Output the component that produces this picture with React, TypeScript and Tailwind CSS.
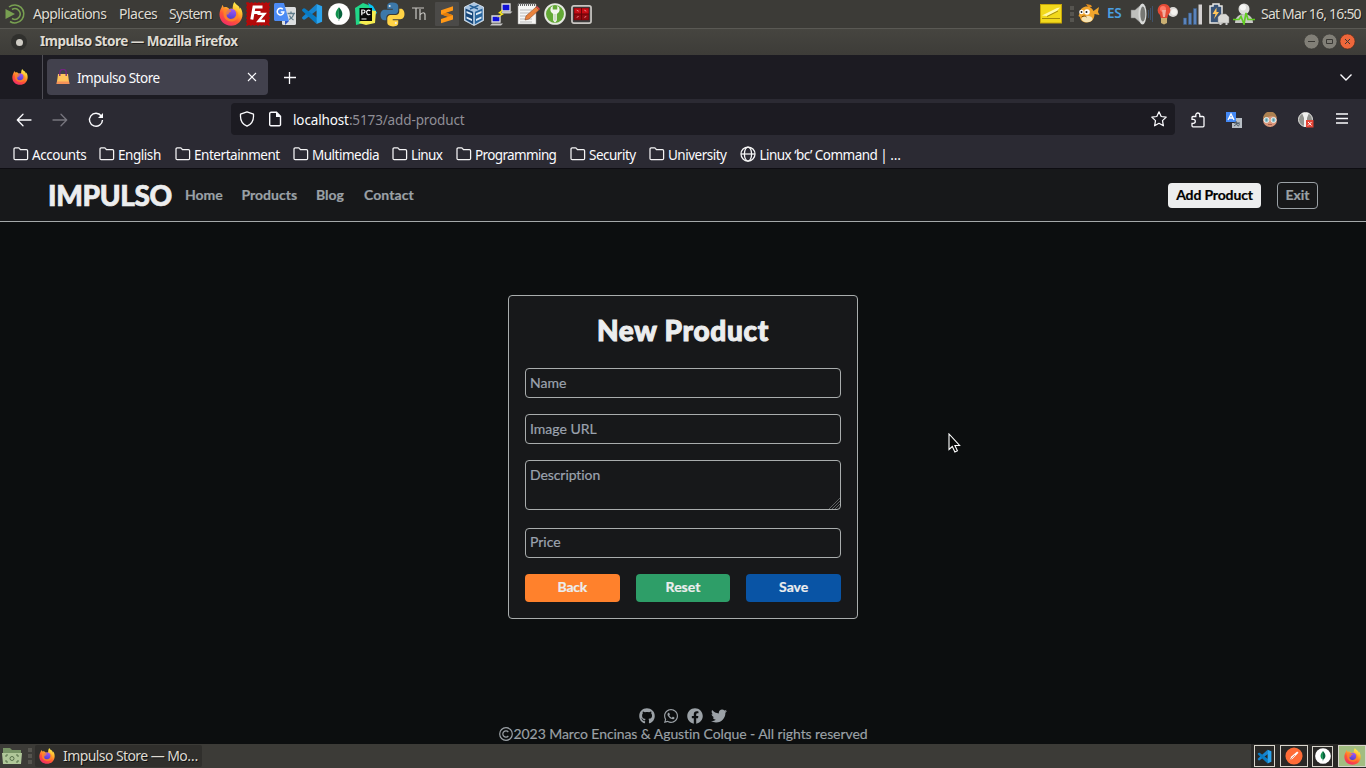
import React from "react";
import { FaGithub, FaWhatsapp, FaFacebook, FaTwitter } from "react-icons/fa";

type IconProps = { size?: number };

function Firefox({ size = 24 }: IconProps) {
  const id = React.useId();
  return (
    <svg width={size} height={size} viewBox="0 0 24 24" className="block shrink-0">
      <defs>
        <linearGradient id={id + "a"} x1="0.8" y1="0" x2="0.25" y2="1">
          <stop offset="0.05" stopColor="#fff44f" />
          <stop offset="0.35" stopColor="#ffb12c" />
          <stop offset="0.65" stopColor="#ff5634" />
          <stop offset="1" stopColor="#f0286c" />
        </linearGradient>
        <linearGradient id={id + "b"} x1="0.6" y1="0" x2="0.4" y2="1">
          <stop offset="0" stopColor="#a458f5" />
          <stop offset="1" stopColor="#4a3fd0" />
        </linearGradient>
      </defs>
      <path d="M15.500 0c.6 2 3.200 3 4.400 4.600.6.800.7 1.700.8 2.100.5-.3.600-1 .6-1.300 1.300 2 2.200 4.200 2.200 6.800C23.500 18.800 18.500 23.700 12 23.700S.5 18.800.5 12.600C.5 10 1.300 7.300 2.500 5.500c.3-.5.500-1.300.6-2.600.9.600 1.400 1.700 1.700 2.500 1-.5 2.200-.5 3.200-.1 1 .4 1.700 1 2.300 1.700 1-.3 2.200-.3 3.200 0 .4-2.300.2-5 2-7z" fill={`url(#${id}a)`} />
      <circle cx="12.200" cy="12" r="5.300" fill={`url(#${id}b)`} />
      <path d="M4.500 7c2-.7 4-.4 5.500.9 1 .2 2.100.3 2.400.8-.2 1-2 1.500-2.600 2.100-.3.500.1 1 .1 1.500-.9-.3-1.800 0-2.200.7-.1 2.700 2.500 4.300 5 3.800 2.600-.4 4.600-2.600 4.500-5.300 0-1.500-.6-2.700-1.500-3.600 2.200.7 3.500 2.800 3.500 5.100 0 3.900-3 6.500-7 6.500s-7.500-2.900-7.700-7z" fill="#ff8a24" opacity="0.75" />
    </svg>
  );
}

function FileZilla() {
  return (
    <svg width="24" height="24" viewBox="0 0 24 24">
      <rect x="1" y="1" width="22" height="22" fill="#b30a0a" stroke="#b30a0a" strokeWidth="1.600" strokeDasharray="2 1.600" />
      <path d="M5.800 17.500L8 5h8.500M7 10.500h7.500" fill="none" stroke="#fff" strokeWidth="3" />
      <path d="M11.500 11.800h7L12.500 19H19" fill="none" stroke="#fff" strokeWidth="2.300" />
    </svg>
  );
}

function Translate() {
  return (
    <svg width="24" height="24" viewBox="0 0 24 24">
      <rect x="9" y="5" width="14" height="18" rx="1.500" fill="#dcdedf" />
      <path d="M14.500 11.500h7.500M18 9.500v2M20.700 11.500c-.5 3-2.500 5-4.500 6M16.500 13.500c.7 2 2.200 3.500 4 4.500" stroke="#607d8b" strokeWidth="1.300" fill="none" />
      <path d="M12 19h4l-4 4z" fill="#3357c2" />
      <path d="M2.500 1H11l5 18H2.500C1.700 19 1 18.300 1 17.500v-15C1 1.700 1.700 1 2.500 1z" fill="#4c8bf5" />
      <path d="M9.800 7.200a3.300 3.300 0 1 0 1 2.800H7.800" stroke="#fff" strokeWidth="1.500" fill="none" />
    </svg>
  );
}

function VSCode({ size = 22 }: IconProps) {
  return (
    <svg width={size} height={size} viewBox="0 0 24 24">
      <path d="M17 1L1.200 15.500v1.300L3 18.200l1.300-.1L17.500 8z" fill="#1684cf" />
      <path d="M17 23L1.200 8.500V7.200L3 5.800l1.300.1L17.500 16z" fill="#087bc4" />
      <path d="M17 1l6 2.600v16.800L17 23z" fill="#2aa4ef" />
    </svg>
  );
}

function Mongo({ size = 22 }: IconProps) {
  return (
    <svg width={size} height={size} viewBox="0 0 24 24">
      <circle cx="12" cy="12" r="11.800" fill="#fff" />
      <path d="M12 4.500c-5.500 5.800-4.200 10.500-.3 13.200z" fill="#10924e" />
      <path d="M12 4.500c5.500 5.800 4.200 10.500.3 13.200l-.2 2h-.4z" fill="#07633d" />
    </svg>
  );
}

function PyCharm() {
  return (
    <svg width="24" height="24" viewBox="0 0 24 24">
      <path d="M1 6l8-5 8 3-3 16-12 3z" fill="#21d789" />
      <path d="M14 1l5 3 4 7-4 3z" fill="#07c3f2" />
      <path d="M15 8l7 1-1 12-9 2-7-2z" fill="#f6ed50" />
      <rect x="5.500" y="6" width="12.500" height="13" fill="#080808" />
      <path d="M7.500 17h5M7.800 13.200V8h1.700a1.500 1.500 0 0 1 0 3H8M16.300 8.800c-2.400-1.600-4.100 0-3.600 2.100.4 2 2.200 2.300 3.600 1.200" stroke="#fff" strokeWidth="1.200" fill="none" />
    </svg>
  );
}

function Python() {
  return (
    <svg width="25" height="25" viewBox="0 0 24 24">
      <path d="M12 .5C7.500.5 7 2.300 7 4v2.500h5.300v1H4.500C1.500 7.500.5 10 .5 12.500s1.200 5 3.500 5h2V15c0-2 1.500-3.500 3.500-3.500h5c1.600 0 3-1.300 3-3V4c0-2-2-3.500-5.500-3.500z" fill="#3c78a9" />
      <circle cx="9.300" cy="3.800" r="1" fill="#eee" />
      <path d="M12.500 23.500c4.500 0 5-1.800 5-3.500v-2.500h-5.300v-1h7.300c3 0 4-2.500 4-5s-1.200-5-3.500-5h-1.500V9c0 2-1.500 3.500-3.500 3.500H10c-1.600 0-3 1.300-3 3V20c0 2 2 3.500 5.500 3.500z" fill="#ffd346" />
      <circle cx="15.200" cy="20.200" r="1" fill="#eee" />
    </svg>
  );
}

function Sublime() {
  return (
    <svg width="24" height="24" viewBox="0 0 24 24">
      <rect width="24" height="24" rx="1" fill="#4b4a48" />
      <path d="M6 8.200L18 4.200v4.300l-7 2.300 7 2.400v4.300L6 21.300V17l7-2.300-7-2.400z" fill="#ff9817" />
      <path d="M6 12.300l5-1.500 7 2.400-5 1.500z" fill="#e37d0a" />
    </svg>
  );
}

function VirtualBox() {
  return (
    <svg width="24" height="24" viewBox="0 0 24 24">
      <path d="M12 .5l9.500 4.500v13.500L12 23.500l-9.500-5V5z" fill="#a9c5e2" stroke="#dfeaf4" strokeWidth=".8" />
      <path d="M3.500 6.500L11.500 10v12.500l-8-4.700z" fill="#174678" />
      <path d="M20.500 6.500L12.500 10v12.500l8-4.700z" fill="#28659d" />
      <path d="M4.500 9l5.500 2.300v2L4.500 11zM4.500 14.500l5.500 2.500v2l-5.500-2.500zM14 11.300L19.500 9v2L14 13.300zM14 17l5.500-2.500v2L14 19z" fill="#e0ecf6" />
      <path d="M7.500 3.300L16 7M16.500 3.300L8 7" stroke="#245e95" strokeWidth="1.400" />
      <path d="M12 9.500v13.500" stroke="#d9e6f2" />
    </svg>
  );
}

function Putty() {
  return (
    <svg width="24" height="24" viewBox="0 0 24 24">
      <g stroke="#ddd" fill="#1010d8">
        <path d="M13 2h8v7h-8zM3 14h8v6H3z" strokeWidth="1.300" />
      </g>
      <path d="M11.500 11.500h10l2-2h-10zM1 23.500h11l2-2H3z" fill="#c8c8c8" />
      <path d="M14 7l-5 4 3 1-4 4 7-4-3-1z" fill="#ffec18" />
    </svg>
  );
}

function Notepad() {
  return (
    <svg width="24" height="24" viewBox="0 0 24 24">
      <path d="M2 2h18v20H2z" fill="#f6f6f4" stroke="#999" strokeWidth=".5" />
      <path d="M2 2.500h18" stroke="#666" strokeWidth="3" strokeDasharray="1 1" />
      <path d="M4 8h12M4 11h9M4 14h7M4 17h12M4 20h12" stroke="#bbb" />
      <path d="M9 18l1-4L20 5l3 3-10 9z" fill="#e9833d" stroke="#8c4d27" strokeWidth=".6" />
      <path d="M20 5l1-1 3 3-1 1z" fill="#e34949" />
    </svg>
  );
}

function KeePass() {
  return (
    <svg width="22" height="22" viewBox="0 0 24 24">
      <circle cx="12" cy="12" r="10.800" fill="#63a936" stroke="#e5e9e1" strokeWidth="2" />
      <path d="M9.500 3v4h5V3a5 5 0 0 1-.5 9v7l-2 2.500-2-2.500v-7A5 5 0 0 1 9.500 3z" fill="#f4f5f0" />
      <path d="M12 12v7" stroke="#a7bc98" />
    </svg>
  );
}

function Cards() {
  return (
    <svg width="23" height="21" viewBox="0 0 24 22">
      <rect x="2" y="2" width="20" height="18" rx="2" fill="#3d3d3d" stroke="#c9c6c2" strokeWidth="1.800" />
      <path d="M4 4h16v13H4z" fill="#650509" />
      <path d="M4.500 4.500h7v5.500h-7zM12.500 4.500h7v5.500h-7z" fill="#c70d15" />
      <path d="M4.500 11h7v5.500h-7zM12.500 11h7v5.500h-7z" fill="#93090f" />
      <path d="M7 6.500l2 1M15 6.500l2 1M7 14l2-1M15 14l2-1" stroke="#ef8a8f" />
    </svg>
  );
}

function Mate() {
  return (
    <svg width="22" height="22" viewBox="0 0 22 22" fill="none" stroke="#78a051">
      <path d="M5 4a9 9 0 1 1 1 14.500" strokeWidth="1.500" />
      <path d="M8 6.500A5.300 5.300 0 1 1 8 15.500" strokeWidth="1.500" />
      <path d="M1.500 6l9.500 5-9.500 5z" fill="#78a051" stroke="none" />
    </svg>
  );
}

function Note() {
  return (
    <svg width="22" height="20" viewBox="0 0 22 20">
      <rect x=".5" y=".5" width="21" height="18.500" fill="#f2d91c" stroke="#c7a608" />
      <path d="M2 11.500L17 4l3-.5L17 7 7 12z" fill="#fff9aa" />
      <path d="M2 14.500h18M7 12.500L18 7" stroke="#a58b0b" fill="none" />
    </svg>
  );
}

function Fish() {
  return (
    <svg width="22" height="20" viewBox="0 0 22 20">
      <path d="M2 8c0-3 3-5.500 7-5.500 3 0 5 1.500 6.500 4.500L21 3l-1 5 1.500 3-5-1c0 5-3 8.500-8 8.500-4 0-6-2.500-6.500-5.500l-1.500-1z" fill="#f1a52c" />
      <path d="M8 0l2 3h4l-1-2z" fill="#e28d20" />
      <ellipse cx="9" cy="15" rx="5.500" ry="3.300" fill="#f5e2b2" />
      <circle cx="3.500" cy="8" r="2.300" fill="#fff" /><circle cx="9" cy="8" r="2.800" fill="#fff" />
      <circle cx="3.500" cy="8" r=".9" fill="#222" /><circle cx="8.500" cy="8" r="1" fill="#222" />
      <path d="M3.500 13c2-1.500 4-1 5 0" stroke="#774300" fill="none" />
    </svg>
  );
}

function Speaker() {
  return (
    <svg width="24" height="24" viewBox="0 0 24 24">
      <path d="M1 8h4l7-6v20l-7-6H1z" fill="#bfc0bd" stroke="#777" strokeWidth=".5" />
      <ellipse cx="12.500" cy="12" rx="4" ry="10.500" fill="#d9dad8" />
      <ellipse cx="12.800" cy="12" rx="2.500" ry="7.500" fill="#777874" />
      <path d="M18.500 8v8M20.500 6v12M22.500 4v16" stroke="#40536b" strokeWidth="1" />
    </svg>
  );
}

function Bulb() {
  return (
    <svg width="22" height="22" viewBox="0 0 22 22">
      <circle cx="16" cy="9" r="5" fill="#dbd9d6" /><circle cx="17" cy="9" r="3" fill="#f4f3ef" />
      <path d="M7 1a6.200 6.200 0 0 0-4 11l1 4h6l1-4A6.200 6.200 0 0 0 7 1z" fill="#e54b36" />
      <path d="M4 15h6v5l-3 1.500L4 20z" fill="#caaf72" />
      <circle cx="6" cy="6" r="3" fill="#ff7966" /><path d="M5 7h4l-1 7H6z" fill="#f2aea0" />
    </svg>
  );
}

function Signal() {
  return (
    <svg width="20" height="21" viewBox="0 0 20 21">
      <g fill="#5b84bc" stroke="#395c8a" strokeWidth=".5">
        <path d="M.5 14h3v6.500h-3zM5.500 9h3v11.500h-3zM10.500 4.500h3v16h-3z" />
      </g>
      <path d="M15.500.5h3.500v20h-3.500z" fill="#d3d0d0" />
    </svg>
  );
}

function Battery() {
  return (
    <svg width="22" height="22" viewBox="0 0 22 22">
      <path d="M2 3h3V1h6v2h3v17H2z" fill="#385376" stroke="#e8e7e3" strokeWidth="1.500" />
      <path d="M8.500 4.500L4.500 11h3l-1.500 5 5-7H8.500z" fill="#ffc65b" />
      <path d="M10 20v-6l3-3h5l3 3v6z" fill="#d9d9d5" stroke="#8b8b86" strokeWidth=".5" />
      <path d="M12.500 19v3M18.500 19v3" stroke="#ccc" strokeWidth="2" />
    </svg>
  );
}

function UserPulse() {
  return (
    <svg width="24" height="22" viewBox="0 0 24 22">
      <circle cx="12" cy="6" r="5.500" fill="#ddddda" /><circle cx="11" cy="4.500" r="3" fill="#f6f6f4" />
      <path d="M3 20c0-12 18-12 18 0z" fill="#c7c8c4" />
      <path d="M1 16.500h6l2-3 3 7.500 2-11 2 6.500h7" fill="none" stroke="#61cc22" strokeWidth="1.700" />
    </svg>
  );
}

function Bag() {
  return (
    <svg width="14" height="16" viewBox="0 0 14 16">
      <path d="M2 5h10l1.300 10H.7z" fill="#ffc35b" /><path d="M.9 12.500h12.200l.3 2.500H.6z" fill="#f69259" />
      <path d="M3.800 7V3.500a3.200 3.200 0 0 1 6.400 0V7" stroke="#70267e" strokeWidth="1.300" fill="none" />
    </svg>
  );
}

function Folder() {
  return (
    <svg width="16" height="14" viewBox="0 0 16 14" className="shrink-0">
      <path d="M1 11.500V2.200C1 1.500 1.500.9 2.200.9h3.300c.4 0 .7.100.9.400l1 1.300h6c.7 0 1.200.6 1.200 1.200v7.700c0 .7-.5 1.200-1.200 1.200H2.200c-.7 0-1.200-.5-1.200-1.200z" fill="none" stroke="#f4f4f5" strokeWidth="1.250" />
    </svg>
  );
}

function Globe() {
  return (
    <svg width="16" height="16" viewBox="0 0 16 16" fill="none" stroke="#f8f8f8" strokeWidth="1.250" className="shrink-0">
      <circle cx="8" cy="8" r="7" /><ellipse cx="8" cy="8" rx="3.600" ry="7" /><path d="M1 8h14" />
    </svg>
  );
}

function ArrowLeft({ size = 16 }: IconProps) {
  return <svg width={size} height={size} viewBox="0 0 16 16" fill="none" stroke="currentColor" strokeWidth="1.300" strokeLinecap="round" strokeLinejoin="round"><path d="M15 8H1.300M7 2.300L1.300 8 7 13.700" /></svg>;
}

function Postman() {
  return (
    <svg width="18" height="18" viewBox="0 0 20 20">
      <circle cx="10" cy="10" r="9.500" fill="#ff6c37" />
      <path d="M5 15l2-4.500L13.500 5l1.500 1.500-6 6z" fill="#fff" /><path d="M5.500 14.500L11 9" stroke="#c9542b" strokeWidth=".7" />
    </svg>
  );
}

const launchers = [
  <Firefox key="ff" />, <FileZilla key="fz" />, <Translate key="gt" />, <VSCode key="vs" />, <Mongo key="mo" />,
  <PyCharm key="pc" />, <Python key="py" />,
  <svg key="th" width="18" height="18" viewBox="0 0 18 18" fill="none" stroke="#c9c8c4" strokeWidth="1.200"><path d="M1 3h12M5 3v11M9 4v11M9 10c2-3 5-3 5 0v5" /></svg>,
  <Sublime key="su" />, <VirtualBox key="vb" />, <Putty key="pu" />, <Notepad key="no" />, <KeePass key="ke" />, <Cards key="ca" />,
];

const bookmarks = [
  { name: "Accounts", box: "w-[86px]", text: "tracking-[-0.45px]" },
  { name: "English", box: "w-[76px]", text: "tracking-[-0.45px]" },
  { name: "Entertainment", box: "w-[118px]", text: "tracking-[-0.45px]" },
  { name: "Multimedia", box: "w-[99px]", text: "tracking-[-0.5px]" },
  { name: "Linux", box: "w-[64px]", text: "tracking-[-0.6px]" },
  { name: "Programming", box: "w-[114px]", text: "tracking-[-0.63px]" },
  { name: "Security", box: "w-[79px]", text: "tracking-[-0.5px]" },
  { name: "University", box: "w-[91px]", text: "tracking-[-0.5px]" },
];

function SystemPanel() {
  return (
    <div className="flex h-7 items-center bg-[#3c3b37] text-[14px] tracking-[-0.6px] text-[#dfdbd2] [text-shadow:1px_1px_0_#22211f]">
      <div className="flex w-[33px] shrink-0 justify-center pr-[3px]"><Mate /></div>
      <span className="w-[86px]">Applications</span>
      <span className="w-[50px] tracking-[-0.5px]">Places</span>
      <span className="w-[48px] tracking-[-0.8px]">System</span>
      <div className="flex h-[26px]">
        {launchers.map((icon, i) => <div key={i} className="flex w-[27px] items-center justify-center">{icon}</div>)}
      </div>
      <div className="ml-auto flex h-[26px] shrink-0 items-center">
        <Note />
        <div className="ml-2 mr-1 flex w-1 flex-col gap-0.5"><i className="h-1 w-1 bg-[#565550]" /><i className="h-1 w-1 bg-[#565550]" /><i className="h-1 w-1 bg-[#565550]" /></div>
        <Fish />
        <span className="ml-[7px] w-[23px] text-[13.500px] font-semibold tracking-[-0.3px] text-[#4b9fe0] [text-shadow:none]">ES</span>
        <Speaker />
        <div className="ml-[3px]"><Bulb /></div>
        <div className="ml-1"><Signal /></div>
        <div className="ml-[5px]"><Battery /></div>
        <div className="ml-0.5"><UserPulse /></div>
        <span className="ml-[5px] w-[105px] tracking-[-0.8px] whitespace-nowrap">Sat Mar 16, 16:50</span>
      </div>
    </div>
  );
}

function TitleBar() {
  return (
    <div className="flex h-[27px] items-center border-t border-[#5a5954] bg-linear-to-b from-[#464540] to-[#3d3c38] text-[13.500px]">
      <div className="ml-[11px] flex h-4 w-4 items-center justify-center rounded-full bg-[#30302d]"><div className="h-[7px] w-[7px] rounded-full bg-[#d0cdc5]" /></div>
      <b className="ml-[13px] tracking-[-0.48px] text-[#dfdbd2] [text-shadow:1px_1px_0_#22211f]">Impulso Store — Mozilla Firefox</b>
      <svg className="ml-auto mr-2.5" width="52" height="16" viewBox="0 0 52 16">
        <circle cx="7.500" cy="7.500" r="7.500" fill="#817f77" stroke="#33322f" strokeWidth=".6" /><circle cx="25.500" cy="7.500" r="7.500" fill="#817f77" stroke="#33322f" strokeWidth=".6" /><circle cx="43.500" cy="7.500" r="7.500" fill="#ee673b" stroke="#542818" strokeWidth=".6" />
        <path d="M4 7.500h7M22.500 5.500h6v4h-6zM41 5l5 5M46 5l-5 5" stroke="#393834" fill="none" />
      </svg>
    </div>
  );
}

function Tabs() {
  return (
    <div className="flex h-11 items-center bg-[#1c1b22] text-[#fbfbfe]">
      <div className="flex h-full w-[43px] items-center border-r border-[#4e4d55] pl-3"><Firefox size={16} /></div>
      <div className="ml-1 flex h-9 w-[221px] items-center rounded-[4px] bg-[#42414d] pl-[9px]">
        <Bag />
        <span className="ml-[7px] pt-[4px] text-[13.500px] tracking-[-0.48px]">Impulso Store</span>
        <svg className="ml-auto mr-[11px]" width="10" height="10" viewBox="0 0 10 10"><path d="M1 1l8 8M9 1L1 9" stroke="currentColor" strokeWidth="1.100" /></svg>
      </div>
      <svg className="ml-4 mt-px" width="12" height="12" viewBox="0 0 12 12"><path d="M5.500 0v12M0 5.500h12" stroke="currentColor" strokeWidth="1.300" /></svg>
      <svg className="ml-auto mr-3.5" width="12" height="7" viewBox="0 0 12 7"><path d="M.5.5L6 6 11.500.5" stroke="currentColor" strokeWidth="1.400" fill="none" /></svg>
    </div>
  );
}

function Toolbar() {
  return (
    <div className="flex h-10 items-center bg-[#2b2a33] pt-px text-[#fbfbfe]">
      <div className="ml-4"><ArrowLeft /></div>
      <div className="ml-5 -scale-x-100 text-[#77767e]"><ArrowLeft /></div>
      <svg className="ml-5" width="16" height="16" viewBox="0 0 16 16" fill="none" stroke="currentColor" strokeWidth="1.400"><path d="M13.300 4A6.500 6.500 0 1 0 14.500 8" /><path d="M15 1v5h-5z" fill="currentColor" stroke="none" /></svg>
      <div className="mb-px ml-[127px] flex h-8 w-[944px] shrink-0 items-center rounded-[4px] bg-[#1c1b22]">
        <svg className="ml-2" width="16" height="16" viewBox="0 0 16 16" fill="none" stroke="currentColor" strokeWidth="1.300"><path d="M8 .8l6.500 2.400v2.300c0 4.500-2.200 7.800-6.500 9.700C3.700 13.300 1.500 10 1.500 5.500V3.200z" strokeLinejoin="round" /></svg>
        <svg className="ml-3" width="16" height="16" viewBox="0 0 16 16" fill="none" stroke="currentColor" strokeWidth="1.400"><path d="M2.700 3A1.500 1.500 0 0 1 4.200 1.300h5.300l4 4v8.200a1.200 1.200 0 0 1-1.200 1.200H3.900a1.200 1.200 0 0 1-1.200-1.200z" /><path d="M9 1v5h5z" fill="currentColor" stroke="none" /></svg>
        <span className="ml-2.5 pt-[3px] text-[13.500px] tracking-[-0.13px] text-[#fbfbfe]">localhost<span className="text-[#8f8e96]">:5173/add-product</span></span>
        <svg className="ml-auto mr-2" width="16" height="16" viewBox="0 0 16 16" fill="none" stroke="currentColor" strokeWidth="1.250" strokeLinejoin="round"><path d="M8 .8l2.200 4.700 5 .6-3.700 3.500.9 5.200L8 12.300l-4.400 2.500.9-5.200L.8 6.100l5-.6z" /></svg>
      </div>
      <svg className="ml-[15px]" width="16" height="16" viewBox="0 0 16 16" fill="none" stroke="currentColor" strokeWidth="1.300"><path d="M2 5.500A1 1 0 0 1 3 4.500h2.800V3a2 2 0 0 1 4 0v1.500h3A1.200 1.200 0 0 1 14 5.700v8.100a1 1 0 0 1-1 1H3a1 1 0 0 1-1-1v-2.500h1.300a2 2 0 0 0 0-4H2z" /></svg>
      <svg className="ml-5" width="16" height="16" viewBox="0 0 16 16"><path d="M7 6h9v10H6v-5h4z" fill="#b8bec5" /><path d="M0 0h10v10H0z" fill="#4388f5" /><path d="M2 8l3-6 3 6M3.200 6h3.500" stroke="#fff" strokeWidth="1.300" fill="none" /><path d="M8 11h6M10 9l1 4c1 2 4 0 1-2l-4 3" stroke="#4d5c69" fill="none" /></svg>
      <svg className="ml-5" width="16" height="16" viewBox="0 0 16 16"><circle cx="8" cy="8" r="7" fill="#d9967a" /><path d="M1 7a7 7 0 0 1 14-1c-4-3-8-2-14 1z" fill="#ad8151" /><g fill="#83bcc5" stroke="#eee"><circle cx="4.500" cy="8" r="2.500" /><circle cx="11.500" cy="8" r="2.500" /></g><path d="M4 8h1M11 8h1" stroke="#3b738c" /><path d="M6 12.500h4" stroke="#a85e50" /></svg>
      <svg className="ml-5" width="16" height="16" viewBox="0 0 16 16"><circle cx="7.500" cy="7.500" r="7" fill="#91928e" stroke="#e4e4e1" /><path d="M4 1h7L9 6v9H6V6z" fill="#f1f1ef" /><path d="M8 8h7.500v7.500H8z" fill="#e44436" /><path d="M10 10l3.500 3.500M13.500 10L10 13.500" stroke="#fff" /></svg>
      <svg className="ml-[22px] mb-0.5" width="12" height="11" viewBox="0 0 12 11"><path d="M0 1h12M0 5.500h12M0 10h12" stroke="currentColor" strokeWidth="1.300" /></svg>
    </div>
  );
}

function Bookmarks() {
  return (
    <div className="flex h-[30px] items-center border-b border-[#0e0d12] bg-[#2b2a33] pl-[12.500px] text-[13.500px] text-[#fbfbfe]">
      {bookmarks.map((b) => (
        <div key={b.name} className={`flex h-full shrink-0 items-center gap-[3.5px] ${b.box}`}><Folder /><span className={`pt-[4px] whitespace-nowrap ${b.text}`}>{b.name}</span></div>
      ))}
      <Globe /><span className="ml-1 pt-[4px] tracking-[-0.53px] whitespace-nowrap">Linux ‘bc’ Command | …</span>
    </div>
  );
}

const field = "block w-full rounded-[4px] border border-[#a9adad] bg-transparent px-1 text-[14px] text-[#ecedee] outline-none [-webkit-text-stroke:0.2px] placeholder:text-[#9ca3af] placeholder:opacity-100";

function StorePage() {
  return (
    <main className="relative flex h-[575px] flex-col bg-[#0c0e0f] font-['Lato','Noto_Sans',sans-serif] text-[#9ba1a6] [font-variant-ligatures:none]">
      <header className="flex h-[53px] shrink-0 items-center border-b border-[#a5a9aa] bg-[#17181a] px-12 text-[14px] font-bold [-webkit-text-stroke:0.2px]">
        <h1 className="w-[137px] text-[28px] font-black tracking-[-0.35px] text-[#ecedee] [-webkit-text-stroke:0.7px]">IMPULSO</h1>
        <nav className="flex"><a className="w-[56.5px]">Home</a><a className="w-[74.500px]">Products</a><a className="w-[48px]">Blog</a><a className="tracking-[0.1px]">Contact</a></nav>
        <button className="ml-auto h-[25px] w-[93px] rounded-[4px] bg-[#ecedee] tracking-[-0.15px] text-black">Add Product</button>
        <button className="ml-4 h-[27px] w-[41px] rounded-[4px] border border-[#9ba1a6]">Exit</button>
      </header>
      <section className="mt-[73px] h-[324px] w-[350px] shrink-0 self-center rounded-[4px] border border-[#a9adad] bg-[#17181a] px-4 pt-4">
        <h2 className="mb-[20px] h-9 text-center text-[28px] leading-9 font-black tracking-[0.7px] text-[#ecedee] [-webkit-text-stroke:1px]">New Product</h2>
        <form onSubmit={(e) => e.preventDefault()}>
          <input aria-label="Name" placeholder="Name" className={`${field} h-[30px] pb-px`} />
          <input aria-label="Image URL" placeholder="Image URL" className={`${field} mt-4 h-[30px] pb-px`} />
          <div className="relative mt-4">
            <textarea aria-label="Description" placeholder="Description" className={`${field} h-[50px] resize-none pt-[3px] leading-[21px] tracking-[-0.08px]`} />
            <svg className="absolute right-px bottom-px" width="11" height="11" viewBox="0 0 11 11" stroke="#686b6c" strokeWidth=".9"><path d="M0 11L11 0M3 11l8-8M6 11l5-5M9 11l2-2" /></svg>
          </div>
          <input aria-label="Price" placeholder="Price" className={`${field} mt-[18px] h-[30px] pb-[3px]`} />
          <div className="mt-4 grid h-7 grid-cols-3 gap-4 text-[14px] font-bold text-[#ecedee] [-webkit-text-stroke:0.2px]">
            <button className="rounded-[4px] bg-[#ff812c] pb-0.5 tracking-[-0.2px]">Back</button><button className="rounded-[4px] bg-[#2e9e68] pb-0.5">Reset</button><button className="rounded-[4px] bg-[#0954a5] pb-0.5">Save</button>
          </div>
        </form>
      </section>
      <footer className="mt-auto flex flex-col items-center text-[14px] [-webkit-text-stroke:0.15px]">
        <div className="flex h-4 gap-2 text-[16px]"><FaGithub /><FaWhatsapp /><FaFacebook /><FaTwitter /></div>
        <p className="flex h-5 items-center tracking-[-0.08px] whitespace-nowrap">
          <svg className="mr-px" width="14" height="14" viewBox="0 0 14 14" fill="none" stroke="currentColor" strokeWidth="1.200"><circle cx="7" cy="7" r="6.300" /><path d="M9.300 5a3.100 3.100 0 1 0 0 4" /></svg>
          <span>2023 Marco Encinas &amp; Agustin Colque - All rights reserved</span>
        </p>
      </footer>
      <svg className="absolute left-[948px] top-[264px]" width="13" height="21" viewBox="0 0 13 21"><path d="M1 1v15.500l3.300-3 2.600 5.500 2.500-1.200-2.500-5.300h4.700z" fill="#080909" stroke="#fff" strokeWidth="1.100" /></svg>
    </main>
  );
}

function TaskBar() {
  return (
    <div className="flex h-6 items-center bg-[#3c3b37] text-[14px] text-[#dfdbd2]">
      <svg className="ml-0.5" width="20" height="18" viewBox="0 0 20 18"><path d="M1 1h7l2 2h9v14H1z" fill="#789466" /><path d="M0 6h20l-1 11H1z" fill="#b0c799" /><path d="M6 8H4v2M14 8h2v2M4 13v2h2M16 13v2h-2" stroke="#57704b" fill="none" /><circle cx="10" cy="11.500" r="2" fill="none" stroke="#57704b" /></svg>
      <div className="ml-1.5 flex flex-col gap-0.5"><i className="h-1 w-1 bg-[#56554f]" /><i className="h-1 w-1 bg-[#56554f]" /><i className="h-1 w-1 bg-[#56554f]" /></div>
      <div className="ml-[3px] flex h-[22px] w-[167px] items-center rounded-[2px] bg-[#302f2c] pl-1"><Firefox size={16} /><span className="ml-2 tracking-[-0.58px] whitespace-nowrap [text-shadow:1px_1px_0_#111]">Impulso Store — Mo…</span></div>
      <div className="ml-auto flex h-full items-center bg-[#292826] pl-[3px]">
        <div className="flex h-[22px] w-[21px] items-center justify-center border border-[#d8d5cc]"><VSCode size={15} /></div>
        <div className="ml-[5px] flex h-[22px] w-[28px] items-center justify-center border border-[#d8d5cc]"><Postman /></div>
        <div className="ml-1 flex h-[21px] w-[21px] items-center justify-center border border-[#d8d5cc]"><Mongo size={16} /></div>
        <div className="ml-[5px] flex h-[22px] w-[28px] items-center justify-center border border-[#d8d5cc] bg-[#a2bd81]"><Firefox size={17} /></div>
      </div>
    </div>
  );
}

export default function App() {
  return (
    <div className="flex h-screen w-screen flex-col overflow-hidden bg-[#0c0e0f] font-['Noto_Sans',sans-serif] leading-none">
      <SystemPanel /><TitleBar /><Tabs /><Toolbar /><Bookmarks /><StorePage /><TaskBar />
    </div>
  );
}
